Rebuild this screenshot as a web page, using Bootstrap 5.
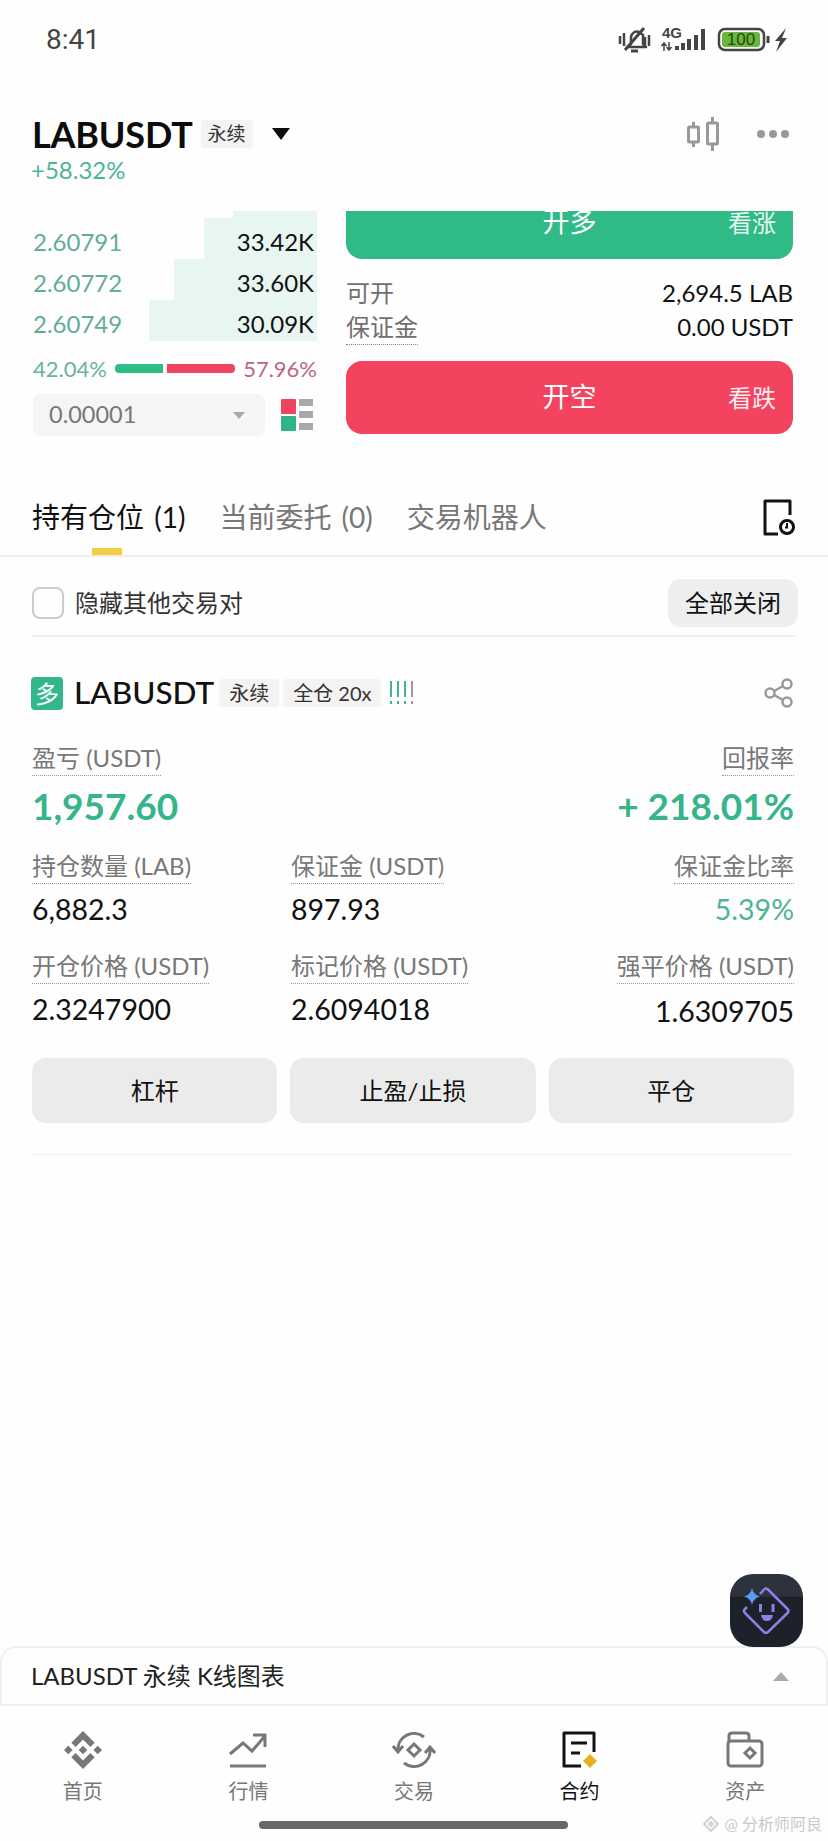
<!DOCTYPE html>
<html lang="zh-CN">
    <head>
        <meta charset="UTF-8" />
        <meta name="viewport" content="width=device-width, initial-scale=1.0" />
        <link href="https://cdn.jsdelivr.net/npm/bootstrap@5.3.3/dist/css/bootstrap.min.css" rel="stylesheet" />
        <title>LABUSDT</title>
        <style>
            body {
                width: 828px;
                height: 1841px;
                overflow: hidden;
                background-color: #fefefe;
                color: #111;
                font-family: "Lato", "Noto Sans CJK SC", sans-serif;
                position: relative;
            }

            .page {
                height: 1841px;
            }

            .status-bar {
                height: 80px;
                padding: 0 40px 0 46px;
                color: #444;
            }

            .status-time {
                font-size: 28px;
                font-family: "Roboto", sans-serif;
            }

            .title-row {
                height: 40px;
                margin-top: 34px;
                padding: 0 38px 0 32px;
            }

            .symbol {
                font-size: 36px;
                font-weight: 700;
                letter-spacing: -0.2px;
                line-height: 40px;
                color: #0c0c0c;
            }

            .tag-box {
                background-color: #f3f3f3;
                color: #333;
                border-radius: 3px;
                font-size: 19px;
                height: 28px;
                line-height: 28px;
                padding: 0 7px;
            }

            .drop-tri {
                width: 0;
                height: 0;
                border-left: 9px solid transparent;
                border-right: 9px solid transparent;
                border-top: 12px solid #0c0c0c;
                margin-left: 19px;
            }

            .delta {
                color: #4db596;
                font-size: 24px;
                line-height: 26px;
                padding-left: 31px;
                margin-top: 3px;
            }

            .trade-view {
                height: 229px;
                margin-top: 28px;
                overflow: hidden;
                padding: 0 35px 0 33px;
            }

            .book-col {
                width: 284px;
            }

            .depth-top {
                height: 7px;
                margin-left: auto;
                width: 84px;
                background-color: #e7f6f1;
            }

            .depth-row {
                position: relative;
                padding: 7px 3px 0 0;
                font-size: 24px;
                line-height: 34px;
            }

            .depth-bar {
                position: absolute;
                right: 0;
                top: 0;
                bottom: 0;
                background-color: #e7f6f1;
            }

            .depth-price {
                color: #61ad97;
                position: relative;
            }

            .depth-qty {
                color: #111;
                position: relative;
            }

            .ratio-row {
                height: 28px;
                margin-top: 13px;
                font-size: 22px;
            }

            .ratio-buy {
                color: #66b49d;
            }

            .ratio-sell {
                color: #c0657b;
            }

            .ratio-bar {
                height: 9px;
                margin: 0 8px;
                gap: 4px;
            }

            .ratio-green {
                width: 48px;
                background-color: #2ebd85;
                border-radius: 4px 0 0 4px;
            }

            .ratio-red {
                width: 66px;
                background-color: #ee4460;
                border-radius: 0 4px 4px 0;
            }

            .step-row {
                margin-top: 12px;
            }

            .step-select {
                width: 232px;
                height: 42px;
                background-color: #f5f5f5;
                border-radius: 7px;
                padding: 0 20px 0 16px;
                font-size: 23.5px;
                color: #777;
            }

            .caret-down {
                width: 0;
                height: 0;
                border-left: 6px solid transparent;
                border-right: 6px solid transparent;
                border-top: 7px solid #aaa;
            }

            .order-col {
                width: 447px;
                margin-top: -25px;
                margin-left: auto;
            }

            .side-btn {
                position: relative;
                display: block;
                width: 100%;
                height: 73px;
                border: 0;
                border-radius: 16px;
                color: #fff;
                font-size: 27px;
                padding: 0;
            }

            .side-btn:hover,
            .side-btn:active {
                color: #fff;
            }

            .side-long,
            .side-long:hover {
                background-color: #30ba85;
            }

            .side-short,
            .side-short:hover {
                background-color: #f3435e;
            }

            .side-hint {
                position: absolute;
                right: 17px;
                top: 50%;
                transform: translateY(-50%);
                font-size: 24px;
                opacity: 0.9;
            }

            .info-rows {
                margin-top: 17px;
                margin-bottom: 17px;
            }

            .info-line {
                height: 34px;
                line-height: 34px;
                font-size: 24px;
            }

            .info-key {
                color: #6f6f6f;
            }

            .info-key.dotted {
                display: inline-block;
                height: 35px;
                border-bottom: 1.5px dotted #888;
            }

            .tabs-row {
                height: 117px;
                padding: 57px 33px 0 32px;
                border-bottom: 2px solid #ededed;
                position: relative;
            }

            .tab-item {
                font-size: 28px;
                line-height: 40px;
                color: #777;
                margin-right: 34px;
                word-spacing: 3px;
            }

            .tab-item.on {
                color: #111;
                position: relative;
            }

            .tab-mark {
                position: absolute;
                left: 60px;
                bottom: 0;
                width: 30px;
                height: 7px;
                background-color: #f0cf45;
            }

            .options-row {
                margin: 22px 33px 0 32px;
                padding-bottom: 9px;
                border-bottom: 2px solid #efefef;
                height: 58px;
            }

            .fake-check {
                width: 32px;
                height: 32px;
                border: 2.5px solid #ccc;
                border-radius: 8px;
                margin-right: 11px;
            }

            .options-label {
                font-size: 24px;
                color: #333;
            }

            .close-all {
                width: 130px;
                height: 48px;
                background-color: #eeeeee;
                border: 0;
                border-radius: 13px;
                font-size: 24px;
                color: #111;
                margin-right: -3px;
                padding: 0;
            }

            .position-box {
                margin: 39px 34px 0 32px;
                padding-bottom: 31px;
                border-bottom: 1px solid #efefef;
            }

            .pos-head {
                height: 34px;
            }

            .side-flag {
                width: 32px;
                height: 33px;
                margin-left: -1px;
                background-color: #32b78d;
                color: #fff;
                font-size: 24px;
                line-height: 33px;
                text-align: center;
                border-radius: 4px;
            }

            .pos-symbol {
                font-size: 31.5px;
                font-weight: 500;
                color: #111;
                margin: 0 5px 0 11px;
            }

            .pos-tag {
                margin-right: 4px;
                font-size: 20px;
                padding: 0 10px;
            }

            .metric-key {
                display: inline-block;
                font-size: 24px;
                line-height: 30px;
                color: #787878;
                padding-bottom: 2px;
                border-bottom: 1.5px dotted #999;
            }

            .metric-a {
                width: 259px;
            }

            .pnl-row {
                margin-top: 33px;
            }

            .pnl-val {
                font-size: 37px;
                line-height: 44px;
                font-weight: 700;
                color: #36b48c;
                margin-top: 8px;
            }

            .metric-row {
                margin-top: 23px;
            }

            .metric-row + .metric-row {
                margin-top: 25px;
            }

            .metric-val {
                font-size: 28.5px;
                line-height: 34px;
                color: #111;
                margin-top: 8px;
            }

            .metric-val.up {
                color: #4db596;
            }

            .metric-val.low {
                margin-top: 10px;
                margin-bottom: -2px;
            }

            .action-row {
                margin-top: 32px;
                gap: 13px;
            }

            .action-btn {
                flex: 1 1 0;
                height: 65px;
                background-color: #ebebeb;
                border: 0;
                border-radius: 14px;
                font-size: 24px;
                color: #111;
            }

            .chart-panel {
                position: relative;
                height: 60px;
                border: 2px solid #f0f0f0;
                border-radius: 16px 16px 0 0;
                padding: 0 37px 0 29px;
                font-size: 24px;
                color: #222;
            }

            .caret-up {
                width: 0;
                height: 0;
                border-left: 8px solid transparent;
                border-right: 8px solid transparent;
                border-bottom: 9px solid #aaa;
            }

            .float-btn {
                position: absolute;
                right: 23px;
                bottom: 100%;
                margin-bottom: 1px;
                width: 73px;
                height: 73px;
                border-radius: 23px;
                background: linear-gradient(#2e323e 30%, #1d212a 32%);
                z-index: 2;
            }

            .tab-bar {
                height: 135px;
            }

            .tab-slot {
                flex: 1 1 0;
                padding-top: 25px;
                color: #777;
                font-size: 20px;
            }

            .tab-slot.on {
                color: #111;
            }

            .tab-icon {
                height: 38px;
                display: block;
            }

            .tab-name {
                line-height: 26px;
                margin-top: 9px;
            }

            .home-bar {
                position: absolute;
                left: 259px;
                top: 1821px;
                width: 309px;
                height: 8px;
                border-radius: 4px;
                background-color: #666;
            }

            .watermark {
                position: absolute;
                right: 6px;
                top: 1811px;
                font-size: 16px;
                line-height: 26px;
                color: #c9c9c9;
                gap: 5px;
            }
        </style>
    </head>
    <body>
        <div class="page d-flex flex-column">
            <div class="status-bar d-flex justify-content-between align-items-center">
                <span class="status-time">8:41</span>
                <svg width="170" height="30" viewBox="0 0 170 30" fill="none" stroke="#444">
                    <path d="M13 19V12a6 6 0 0 1 8-5l4 3v9l3 3H9z" stroke-width="2.5" stroke-linejoin="round" />
                    <path d="M13 26h7M7 25 26 3" stroke-width="3" />
                    <path d="M2 11v8M6 8v13M27 12v8M31 10v11" stroke-width="2.5" />
                    <text x="44" y="13" font-family="Liberation Sans" font-size="15" font-weight="700" fill="#444" stroke="none">4G</text>
                    <path d="M46 18v8M43.5 21l2.5-3 2.5 3M51 17v8M48.5 22l2.5 3 2.5-3" stroke-width="1.5" />
                    <path d="M59 21v4M65 18v7M71 14v11M78 10v15M85 4v21" stroke-width="4" />
                    <rect x="101" y="4" width="45" height="21" rx="6" stroke-width="2.5" />
                    <rect x="104" y="7" width="38" height="15" rx="3" fill="#6ab53c" stroke="none" />
                    <text x="123" y="20" text-anchor="middle" font-family="Liberation Sans" font-size="17" fill="#244a10" stroke="none">100</text>
                    <path d="M150 11v7" stroke-width="3" />
                    <path d="M168 3l-11 13h5l-4 11 11-14h-5z" fill="#444" stroke="none" />
                </svg>
            </div>

            <div class="title-row d-flex align-items-center">
                <span class="symbol">LABUSDT</span>
                <span class="tag-box ms-2">永续</span>
                <span class="drop-tri"></span>
                <svg class="ms-auto" width="32" height="34" viewBox="0 0 32 34" fill="none" stroke="#999" stroke-width="3">
                    <rect x="1.5" y="10" width="10" height="15" rx="1" />
                    <rect x="20.5" y="6" width="10" height="21" rx="1" />
                    <path d="M6.5 5v5M6.5 25v5M25.5 0v6M25.5 27v7" />
                </svg>
                <svg style="margin-left: 37px" width="34" height="10" viewBox="0 0 34 10" fill="#999">
                    <circle cx="5" cy="5" r="4" />
                    <circle cx="17" cy="5" r="4" />
                    <circle cx="29" cy="5" r="4" />
                </svg>
            </div>
            <div class="delta">+58.32%</div>

            <div class="trade-view d-flex">
                <div class="book-col">
                    <div class="depth-top"></div>
                    <div class="depth-row d-flex justify-content-between">
                        <div class="depth-bar" style="width: 113px"></div>
                        <span class="depth-price">2.60791</span><span class="depth-qty">33.42K</span>
                    </div>
                    <div class="depth-row d-flex justify-content-between">
                        <div class="depth-bar" style="width: 143px"></div>
                        <span class="depth-price">2.60772</span><span class="depth-qty">33.60K</span>
                    </div>
                    <div class="depth-row d-flex justify-content-between">
                        <div class="depth-bar" style="width: 168px"></div>
                        <span class="depth-price">2.60749</span><span class="depth-qty">30.09K</span>
                    </div>
                    <div class="ratio-row d-flex justify-content-between align-items-center">
                        <span class="ratio-buy">42.04%</span>
                        <div class="ratio-bar d-flex flex-grow-1">
                            <div class="ratio-green"></div>
                            <div class="ratio-red flex-grow-1"></div>
                        </div>
                        <span class="ratio-sell">57.96%</span>
                    </div>
                    <div class="step-row d-flex justify-content-between align-items-center">
                        <div class="step-select d-flex justify-content-between align-items-center">
                            <span>0.00001</span>
                            <span class="caret-down"></span>
                        </div>
                        <svg class="me-1" width="32" height="32" viewBox="0 0 32 32">
                            <rect x="0" y="0" width="15" height="15" rx="1" fill="#ee4460" />
                            <rect x="0" y="17" width="15" height="15" rx="1" fill="#2fb488" />
                            <rect x="18" y="0" width="14" height="7" fill="#a8a8a8" />
                            <rect x="18" y="12" width="14" height="7" fill="#a8a8a8" />
                            <rect x="18" y="24" width="14" height="7" fill="#a8a8a8" />
                        </svg>
                    </div>
                </div>

                <div class="order-col">
                    <button type="button" class="btn side-btn side-long">开多<span class="side-hint">看涨</span></button>
                    <div class="info-rows">
                        <div class="info-line d-flex justify-content-between">
                            <span class="info-key">可开</span><span>2,694.5 LAB</span>
                        </div>
                        <div class="info-line d-flex justify-content-between">
                            <span class="info-key dotted">保证金</span><span>0.00 USDT</span>
                        </div>
                    </div>
                    <button type="button" class="btn side-btn side-short">开空<span class="side-hint">看跌</span></button>
                </div>
            </div>

            <div class="tabs-row d-flex">
                <span class="tab-item on">持有仓位 (1)<span class="tab-mark"></span></span>
                <span class="tab-item">当前委托 (0)</span>
                <span class="tab-item">交易机器人</span>
                <svg class="ms-auto" style="margin-top: 2px" width="32" height="37" viewBox="0 0 32 37" fill="none" stroke="#111" stroke-width="3">
                    <path d="M27 16V2H2v33h13" stroke-linejoin="round" />
                    <circle cx="24" cy="28" r="6.5" />
                    <path d="M24 24v4.5h-2" stroke-width="2" />
                </svg>
            </div>

            <div class="options-row d-flex align-items-start justify-content-between">
                <div class="d-flex align-items-center" style="height: 48px">
                    <span class="fake-check"></span>
                    <span class="options-label">隐藏其他交易对</span>
                </div>
                <button type="button" class="btn close-all">全部关闭</button>
            </div>

            <div class="position-box">
                <div class="pos-head d-flex align-items-center">
                    <span class="side-flag">多</span>
                    <span class="pos-symbol">LABUSDT</span>
                    <span class="tag-box pos-tag">永续</span>
                    <span class="tag-box pos-tag">全仓 20x</span>
                    <svg class="ms-1" width="26" height="24" viewBox="0 0 26 24">
                        <path d="M2 0v16M2 20v3M9 0v16M9 20v3M16 0v16M16 20v3" stroke="#3fb493" stroke-width="2" />
                        <path d="M23 0v16M23 20v3" stroke="#9a9a9a" stroke-width="2" />
                    </svg>
                    <svg class="ms-auto" width="30" height="30" viewBox="0 0 30 30" fill="none" stroke="#999" stroke-width="2.5">
                        <circle cx="23" cy="6" r="4.5" />
                        <circle cx="6" cy="15" r="4.5" />
                        <circle cx="23" cy="24" r="4.5" />
                        <path d="M10 13 19 8M10 17l9 5" />
                    </svg>
                </div>

                <div class="pnl-row d-flex justify-content-between">
                    <div>
                        <span class="metric-key">盈亏 (USDT)</span>
                        <div class="pnl-val">1,957.60</div>
                    </div>
                    <div class="text-end">
                        <span class="metric-key">回报率</span>
                        <div class="pnl-val">+ 218.01%</div>
                    </div>
                </div>

                <div class="metric-row d-flex">
                    <div class="metric-a">
                        <span class="metric-key">持仓数量 (LAB)</span>
                        <div class="metric-val">6,882.3</div>
                    </div>
                    <div class="flex-grow-1">
                        <span class="metric-key">保证金 (USDT)</span>
                        <div class="metric-val">897.93</div>
                    </div>
                    <div class="text-end">
                        <span class="metric-key">保证金比率</span>
                        <div class="metric-val up">5.39%</div>
                    </div>
                </div>

                <div class="metric-row d-flex">
                    <div class="metric-a">
                        <span class="metric-key">开仓价格 (USDT)</span>
                        <div class="metric-val">2.3247900</div>
                    </div>
                    <div class="flex-grow-1">
                        <span class="metric-key">标记价格 (USDT)</span>
                        <div class="metric-val">2.6094018</div>
                    </div>
                    <div class="text-end">
                        <span class="metric-key">强平价格 (USDT)</span>
                        <div class="metric-val low">1.6309705</div>
                    </div>
                </div>

                <div class="action-row d-flex">
                    <button type="button" class="btn action-btn">杠杆</button>
                    <button type="button" class="btn action-btn">止盈/止损</button>
                    <button type="button" class="btn action-btn">平仓</button>
                </div>
            </div>

            <div class="flex-grow-1"></div>

            <div class="chart-panel d-flex justify-content-between align-items-center">
                <div class="float-btn">
                    <svg width="73" height="73" viewBox="0 0 73 73" fill="none">
                        <path d="M30 20l4-4.5q2-2 4 0L57.5 35q2 2 0 4L38 58q-2 2-4 0L15 39q-2-2 0-4l2-2" stroke="#8b80e8" stroke-width="2.5" />
                        <path d="M22 14q1.5 7 8 8.5q-6.5 1.5-8 8.5q-1.5-7-8-8.5q6.5-1.5 8-8.5z" fill="#5b9cf0" />
                        <path d="M30.5 30v8M43 30v8" stroke="#8b80e8" stroke-width="3" />
                        <path d="M31 41h12q-1 6-6 6t-6-6z" fill="#8b80e8" />
                    </svg>
                </div>
                <span>LABUSDT 永续 K线图表</span>
                <span class="caret-up"></span>
            </div>

            <div class="tab-bar d-flex">
                <div class="tab-slot d-flex flex-column align-items-center">
                    <svg class="tab-icon" width="38" height="38" viewBox="0 0 24 24" fill="#777">
                        <path d="M7.34 10.08 12 5.42l4.66 4.66 2.71-2.71L12 0 4.63 7.37z" />
                        <path d="M0 12l2.71-2.71L5.42 12l-2.71 2.71z" />
                        <path d="M7.34 13.92 12 18.58l4.66-4.66 2.71 2.71L12 24l-7.37-7.37z" />
                        <path d="M18.58 12l2.71-2.71L24 12l-2.71 2.71z" />
                        <path d="M14.75 12 12 9.25 9.25 12 12 14.75z" />
                    </svg>
                    <span class="tab-name">首页</span>
                </div>
                <div class="tab-slot d-flex flex-column align-items-center">
                    <svg class="tab-icon" width="38" height="38" viewBox="0 0 38 38" fill="none" stroke="#777" stroke-width="3">
                        <path d="M1 23 14 12l9 8L36 5M24 4h12v12" />
                        <path d="M1 35h36" />
                    </svg>
                    <span class="tab-name">行情</span>
                </div>
                <div class="tab-slot d-flex flex-column align-items-center">
                    <svg class="tab-icon" width="44" height="38" viewBox="0 0 44 38" fill="none" stroke="#777" stroke-width="3">
                        <path d="M6 20A16 16 0 0 1 32 6M1 15l5 6 5-6" />
                        <path d="M38 18A16 16 0 0 1 12 32M33 22l5-6 5 6" />
                        <path d="M22 13l6 6-6 6-6-6z" />
                    </svg>
                    <span class="tab-name">交易</span>
                </div>
                <div class="tab-slot on d-flex flex-column align-items-center">
                    <svg class="tab-icon" width="38" height="38" viewBox="0 0 38 38" fill="none" stroke="#111" stroke-width="3">
                        <path d="M33 21V2H3v33h17" stroke-linejoin="round" />
                        <path d="M10 12h16M10 22h9" />
                        <path d="M29 23l7 7-7 7-7-7z" fill="#e5b020" stroke="none" />
                    </svg>
                    <span class="tab-name">合约</span>
                </div>
                <div class="tab-slot d-flex flex-column align-items-center">
                    <svg class="tab-icon" width="38" height="38" viewBox="0 0 38 38" fill="none" stroke="#777" stroke-width="3">
                        <path d="M3 11V5q0-3 3-3h14q3 0 3 3v6" />
                        <rect x="2" y="10" width="34" height="25" rx="3" />
                        <path d="M24 17l5 5-5 5-5-5z" />
                    </svg>
                    <span class="tab-name">资产</span>
                </div>
            </div>
        </div>
        <div class="home-bar"></div>
        <div class="watermark d-flex align-items-center">
            <svg width="18" height="18" viewBox="0 0 18 18" fill="none" stroke="#d2d2d2" stroke-width="2">
                <path d="M9 2l7 7-7 7-7-7z" />
                <path d="M9 7l2 2-2 2-2-2z" />
            </svg>
            <span>@ 分析师阿良</span>
        </div>
        <script src="https://cdn.jsdelivr.net/npm/bootstrap@5.3.3/dist/js/bootstrap.bundle.min.js"></script>
    </body>
</html>
